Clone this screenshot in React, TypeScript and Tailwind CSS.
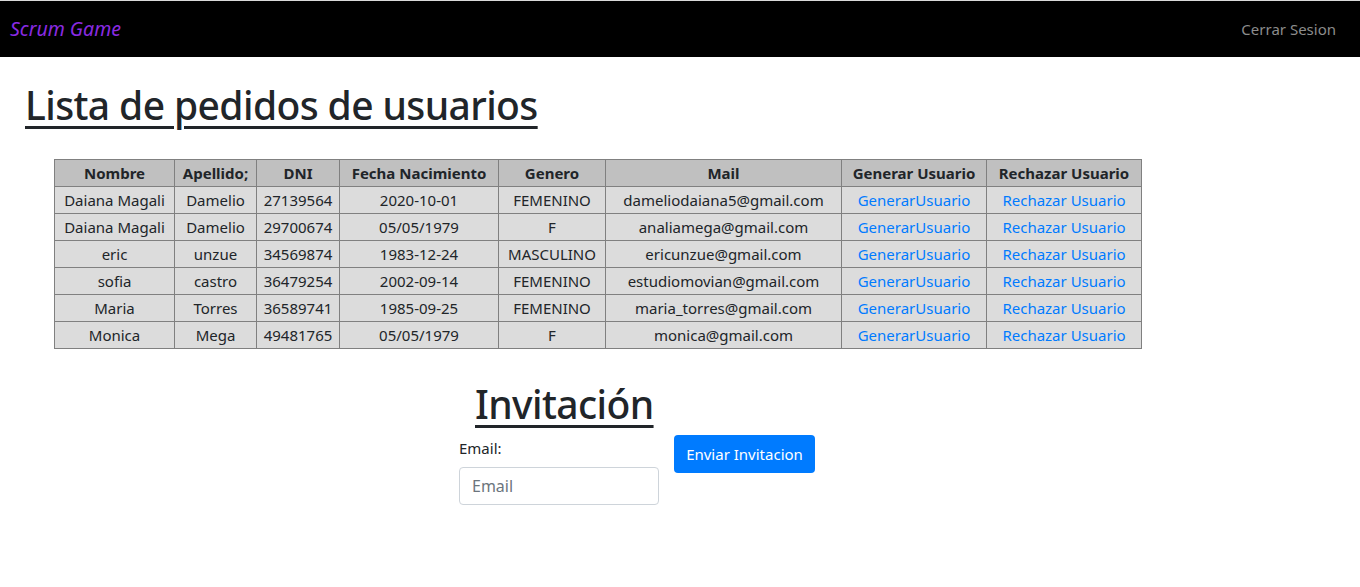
import React from "react";

const rows = [
  ["Daiana Magali", "Damelio", "27139564", "2020-10-01", "FEMENINO", "dameliodaiana5@gmail.com"],
  ["Daiana Magali", "Damelio", "29700674", "05/05/1979", "F", "analiamega@gmail.com"],
  ["eric", "unzue", "34569874", "1983-12-24", "MASCULINO", "ericunzue@gmail.com"],
  ["sofia", "castro", "36479254", "2002-09-14", "FEMENINO", "estudiomovian@gmail.com"],
  ["Maria", "Torres", "36589741", "1985-09-25", "FEMENINO", "maria_torres@gmail.com"],
  ["Monica", "Mega", "49481765", "05/05/1979", "F", "monica@gmail.com"],
];

const headers = ["Nombre", "Apellido;", "DNI", "Fecha Nacimiento", "Genero", "Mail", "Generar Usuario", "Rechazar Usuario"];
const widths = [120, 82, 83, 159, 107, 236, 145, 155];

export default function App() {
  return (
    <div className="min-h-[587px] bg-white text-[#212529] font-['Noto_Sans','Open_Sans',sans-serif]">
      <nav className="h-[57px] bg-black border-t border-[#d9d9d9] flex items-center justify-between px-[10px]">
        <span className="text-[19.5px] italic text-[#8a2be2]">Scrum Game</span>
        <span className="text-[15px] text-[#8c8c8c] mr-[14px]">Cerrar Sesion</span>
      </nav>
      <h1 className="ml-[25px] mt-[24px] text-[39px] tracking-[-0.6px] leading-[48px] font-medium underline decoration-[3px] underline-offset-[6px]">
        Lista de pedidos de usuarios
      </h1>
      <table className="ml-[54px] mt-[30px] table-fixed border-collapse text-[15px] leading-[24px]" style={{ width: 1087 }}>
        <colgroup>
          {widths.map((w, i) => (
            <col key={i} style={{ width: w }} />
          ))}
        </colgroup>
        <thead>
          <tr className="bg-[#c0c0c0]">
            {headers.map((h) => (
              <th key={h} className="border border-[#808080] font-bold text-center h-[27px] p-0 whitespace-nowrap">
                {h}
              </th>
            ))}
          </tr>
        </thead>
        <tbody>
          {rows.map((r, i) => (
            <tr key={i} className="bg-[#dcdcdc]">
              {r.map((c, j) => (
                <td key={j} className="border border-[#808080] text-center h-[27px] p-0 whitespace-nowrap">
                  {c}
                </td>
              ))}
              <td className="border border-[#808080] text-center h-[27px] p-0 whitespace-nowrap text-[#007bff]">GenerarUsuario</td>
              <td className="border border-[#808080] text-center h-[27px] p-0 whitespace-nowrap text-[#007bff]">Rechazar Usuario</td>
            </tr>
          ))}
        </tbody>
      </table>
      <div className="ml-[459px] mt-[31px] w-[356px]">
        <h1 className="ml-[16px] text-[39px] tracking-[-0.6px] leading-[48px] font-medium underline decoration-[3px] underline-offset-[6px]">
          Invitación
        </h1>
        <div className="flex items-start gap-[15px] mt-[7px]">
          <div className="flex flex-col">
            <label className="text-[15px] leading-[24px] mt-[1px]">Email:</label>
            <input
              placeholder="Email"
              className="mt-[7px] w-[200px] h-[38px] border border-[#ced4da] rounded-[4px] px-[12px] text-[16px] placeholder:text-[#6c757d] outline-none"
            />
          </div>
          <button className="w-[141px] h-[38px] bg-[#007bff] text-white text-[15px] rounded-[4px]">Enviar Invitacion</button>
        </div>
      </div>
    </div>
  );
}
